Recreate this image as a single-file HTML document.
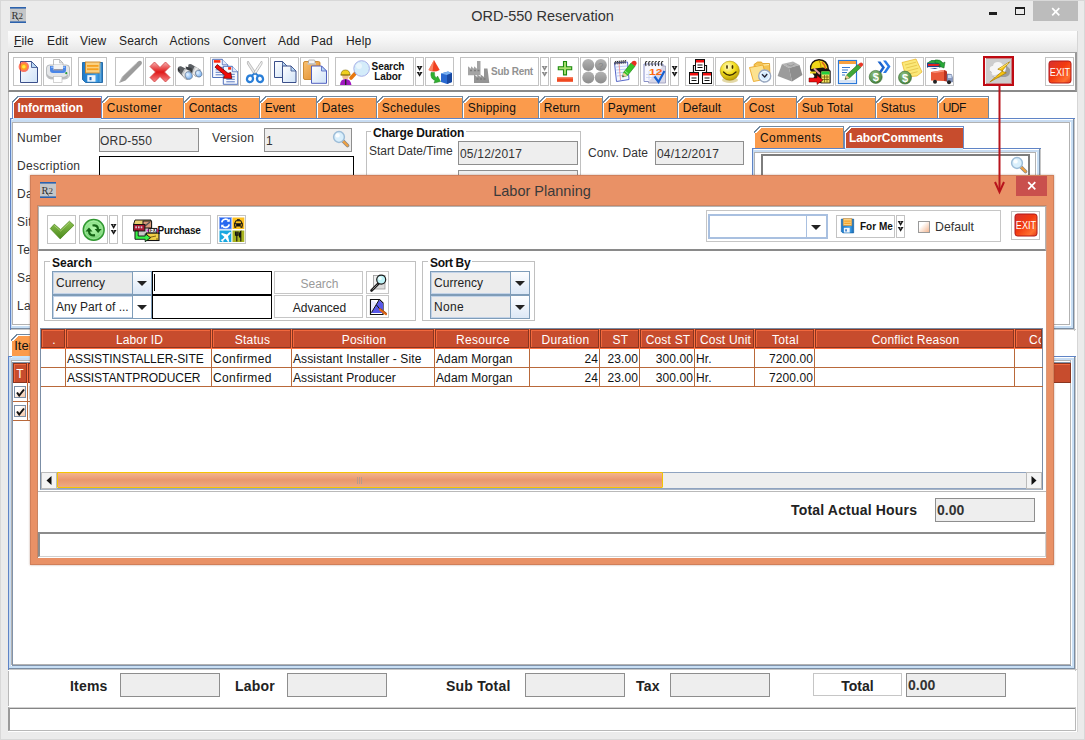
<!DOCTYPE html>
<html><head><meta charset="utf-8"><title>ORD-550 Reservation</title>
<style>
*{box-sizing:border-box;margin:0;padding:0}
html,body{width:1085px;height:740px;overflow:hidden;background:#ebebeb;font-family:"Liberation Sans",sans-serif;font-size:12px;color:#222}
.a,.a2 *{position:absolute}
.a{position:absolute}
#win{position:absolute;left:0;top:0;width:1085px;height:740px;background:#ebebeb;overflow:hidden}
.title{position:absolute;left:0;top:7.600px;width:1085px;text-align:center;font-size:14.5px;color:#333}
.menubar{left:8px;top:31px;width:1069px;height:21px;background:linear-gradient(#fdfdfd,#f6f6f6 40%,#e7e7e7);}
.menubar span{position:absolute;top:3px;font-size:12px;color:#222;letter-spacing:.15px}
.client{left:8px;top:52px;width:1069px;height:680px;background:#fff}
.toolbar{left:8px;top:52px;width:1069px;height:40px;background:#fff;border:1px solid #a5a5a5;border-bottom:2px solid #8a8a8a;border-right:2px solid #999}
.tb{position:absolute;top:57px;width:29px;height:29px;border:1px solid #c3c3c3;background:#fff;overflow:hidden}
.tb svg{position:absolute;left:0;top:0}
svg{display:block}
.dd{position:absolute;top:57px;width:10px;height:29px;border:1px solid #c3c3c3;background:#fff}
.tab{position:absolute;background:#fb9b4c;border-top:1px solid #7088a0;border-right:1px solid #7088a0;box-shadow:inset 1px 1px 0 #fff;font-size:12px;color:#111;padding:4px 0 0 5px;white-space:nowrap}
.tab:before{content:"";position:absolute;left:0;top:-1px;width:7px;height:7px;background:linear-gradient(135deg,#fff 0,#fff 40%,#7088a0 40%,#7088a0 54%,#fff 54%,#fff 66%,rgba(255,255,255,0) 66%)}
.tab.sel{background:#c74c2d;color:#fff;font-weight:bold;border-left:1px solid #6c8cc8;border-top-color:#6c8cc8;border-right-color:#6c8cc8}
.tab.sel:before{left:-1px}
.panel{position:absolute;border:1px solid #7f9fd6;background:#fff}
.panel:before{content:"";position:absolute;left:0;top:0;right:0;bottom:0;border:3px solid #cfe0f6}
.panel:after{content:"";position:absolute;left:3px;top:3px;right:3px;bottom:3px;border:1px solid #a3a3a3}
.lbl{position:absolute;font-size:12px;color:#333;white-space:nowrap;letter-spacing:.3px}
.b{font-weight:bold;letter-spacing:0}
.fld{position:absolute;background:#eeeeee;border:1px solid #8e8e8e;font-size:12px;color:#333;white-space:nowrap;overflow:hidden;letter-spacing:.2px}
.grp{position:absolute;border:1px solid #c0c0c0}
.grp b{position:absolute;top:-8px;left:6px;background:#fff;padding:0 2px;font-size:12px;color:#111;white-space:nowrap}
.th{position:absolute;height:19px;background:#c74c2d;color:#fff;font-size:12px;text-align:center;border:1px solid #8a3520;box-shadow:inset 1px 1px 0 #f2683c;padding:3px 0 0 2px;white-space:nowrap;overflow:hidden;letter-spacing:.3px}
.td{position:absolute;height:19px;font-size:12px;color:#111;white-space:nowrap;overflow:hidden;border-right:1px solid #b9693a;border-bottom:1px solid #b9693a;padding:3px 1px 0 1px;letter-spacing:.1px}
.r{text-align:right;padding-right:1px}
.combo{position:absolute;height:24px;border:1px solid #7f9db9;box-shadow:inset 0 0 0 1px #c3d3e8;background:#ececec;font-size:12px;color:#222;white-space:nowrap}
.combo i{position:absolute;right:0;top:0;bottom:0;width:19px;border-left:1px solid #7f9db9;background:linear-gradient(#fdfeff,#dce8f6)}
.combo i:after{content:"";position:absolute;left:4px;top:9px;border:5px solid transparent;border-top:5px solid #222;border-bottom:none}
.combo span{position:absolute;left:3px;top:4px;letter-spacing:.3px}
.btn{position:absolute;border:1px solid #c6c6c6;background:#fff;font-size:12px;text-align:center;color:#222;letter-spacing:0;padding-left:2px}
</style></head><body>
<div id="win">
<svg width="0" height="0" style="position:absolute"><defs>
<linearGradient id="gdoc" x1="0" y1="0" x2="1" y2="1"><stop offset="0" stop-color="#ffffff"/><stop offset="1" stop-color="#cfe2f7"/></linearGradient>
<linearGradient id="gred" x1="0" y1="0" x2="0" y2="1"><stop offset="0" stop-color="#f7b0b0"/><stop offset=".5" stop-color="#e01818"/><stop offset="1" stop-color="#f58a8a"/></linearGradient>
<linearGradient id="gexit" x1="0" y1="0" x2="1" y2="1"><stop offset="0" stop-color="#d83030"/><stop offset=".45" stop-color="#f23a10"/><stop offset=".8" stop-color="#ff7030"/><stop offset="1" stop-color="#e03818"/></linearGradient>
<radialGradient id="gsmile" cx=".4" cy=".3" r=".8"><stop offset="0" stop-color="#fffbd0"/><stop offset=".45" stop-color="#f5e020"/><stop offset="1" stop-color="#a88a00"/></radialGradient>
<radialGradient id="ggreen" cx=".5" cy=".45" r=".6"><stop offset="0" stop-color="#b4f8ac"/><stop offset=".6" stop-color="#8ce088"/><stop offset="1" stop-color="#48b048"/></radialGradient>
<radialGradient id="gdollar" cx=".4" cy=".3" r=".8"><stop offset="0" stop-color="#8fc080"/><stop offset="1" stop-color="#3e7a36"/></radialGradient>
<linearGradient id="gblue" x1="0" y1="0" x2="1" y2="0"><stop offset="0" stop-color="#1d78c8"/><stop offset=".7" stop-color="#3fa0e8"/><stop offset="1" stop-color="#1668b0"/></linearGradient>
<linearGradient id="gclip" x1="0" y1="0" x2="1" y2="1"><stop offset="0" stop-color="#f8c070"/><stop offset="1" stop-color="#e08a28"/></linearGradient>
<radialGradient id="glens" cx=".4" cy=".35" r=".7"><stop offset="0" stop-color="#e8f4ff"/><stop offset="1" stop-color="#6aa8ee"/></radialGradient>
<linearGradient id="ggray" x1="0" y1="0" x2="0" y2="1"><stop offset="0" stop-color="#b4b4b4"/><stop offset="1" stop-color="#8c8c8c"/></linearGradient>
<linearGradient id="gcheck" x1="0" y1="0" x2="0" y2="1"><stop offset="0" stop-color="#8cc050"/><stop offset="1" stop-color="#4a8a1c"/></linearGradient>
</defs></svg>
<div class="a" style="left:0;top:0;width:1085px;height:740px;border:1px solid #d8d8d8"></div>
<svg class="a" style="left:10px;top:7px" width="16" height="16"><rect width="16" height="16" fill="#c4c6c8"/><rect width="16" height="1.6" fill="#2c62ad"/><rect y="14.4" width="16" height="1.6" fill="#2c62ad"/><text x="1.5" y="11.5" font-family="Liberation Serif,serif" font-size="10.5" fill="#333">R</text><text x="8.5" y="11.5" font-family="Liberation Serif,serif" font-size="9" fill="#333">2</text><path d="M6 11l3 2.5" stroke="#333" stroke-width=".8"/></svg>
<div class="title">ORD-550 Reservation</div>
<div class="a" style="left:989px;top:12px;width:8px;height:3px;background:#1e1e1e"></div>
<div class="a" style="left:1015px;top:7px;width:10px;height:8px;border:1px solid #1e1e1e;border-top:2px solid #1e1e1e"></div>
<div class="a" style="left:1033px;top:1px;width:45px;height:20px;background:#bcbcbc"></div>
<svg class="a" style="left:1051px;top:7px" width="10" height="10"><path d="M1.2 1.2L8.3 8.3M8.3 1.2L1.2 8.3" stroke="#fff" stroke-width="1.7"/></svg>
<div class="a client"></div>
<div class="a" style="left:1077px;top:31px;width:1px;height:701px;background:#d6d6d6"></div><div class="a" style="left:8px;top:92px;width:1px;height:614px;background:#b8b8b8"></div>
<div class="a menubar">
<span style="left:6px"><u>F</u>ile</span>
<span style="left:39px">Edit</span>
<span style="left:72px">View</span>
<span style="left:111px">Search</span>
<span style="left:161.5px">Actions</span>
<span style="left:215px">Convert</span>
<span style="left:270px">Add</span>
<span style="left:303px">Pad</span>
<span style="left:338px">Help</span>
</div>
<div class="a toolbar"></div>
<div class="tb" style="left:13px"><svg width="27" height="27" viewBox="0 0 27 27"><path d="M6.5 3.5h11l6 6v15h-17z" fill="url(#gdoc)" stroke="#3a4f8a" stroke-width="1"/><path d="M17.5 3.5v6h6z" fill="#b8d8f4" stroke="#3a4f8a" stroke-width="0.8"/><circle cx="9.8" cy="8.8" r="5.2" fill="#ff4a2a" opacity=".75"/><circle cx="9.8" cy="8.8" r="3.3" fill="#ffa020"/><circle cx="9.8" cy="8.8" r="1.8" fill="#ffe840"/></svg></div>
<div class="tb" style="left:43px"><svg width="27" height="27" viewBox="0 0 27 27"><path d="M9.5 1.5h6l3.5 3.5v7h-9.5z" fill="#fff" stroke="#b0b0b0" stroke-width=".8"/><path d="M15.5 1.5v3.5h3.5z" fill="#e0e0e0" stroke="#b0b0b0" stroke-width=".6"/><path d="M2.5 10q0-3 3-3h17q3 0 3 3v6q0 5-6 5h-11q-6 0-6-5z" fill="#e4e6e8" stroke="#a8acb0" stroke-width=".8"/><path d="M6 8h16v4q0 3-3 3h-10q-3 0-3-3z" fill="#4a86e8"/><path d="M7 8.5h14v1.5h-14z" fill="#8ab4f4"/><rect x="9.5" y="7" width="9.5" height="5" fill="#f4f4f4"/><rect x="9.5" y="11" width="9.5" height="1.5" fill="#9a9aa8"/><circle cx="22.3" cy="15.2" r="1.1" fill="#2a9a3a"/><path d="M3 16q2 3 6 3h9q4 0 6-3v2q-1 3-6 3h-9q-5 0-6-3z" fill="#b8babc"/><rect x="9.5" y="18.5" width="8.5" height="6" fill="#fff" stroke="#c0c0c0" stroke-width=".7"/></svg></div>
<div class="tb" style="left:78px"><svg width="27" height="27" viewBox="0 0 27 27"><path d="M3.5 4.5h20v20h-17l-3-3z" fill="url(#gblue)" stroke="#0d5aa0" stroke-width=".8"/><rect x="6.5" y="4" width="14.5" height="11" fill="#fbd080" stroke="#c8862a" stroke-width=".9"/><rect x="8" y="7" width="11.5" height="1.8" fill="#f5a020"/><rect x="8" y="10.3" width="11.5" height="1.8" fill="#f5a020"/><rect x="8.3" y="17.2" width="8.2" height="6.5" fill="#f0f6fc"/><rect x="10.5" y="19" width="2" height="3.2" fill="#1d68c0"/><rect x="20.5" y="5" width="2" height="19" fill="#7cc4f4" opacity=".6"/></svg></div>
<div class="tb" style="left:115px"><svg width="27" height="27" viewBox="0 0 27 27"><path d="M3 25L6 19L22 3.5q2-1.5 3.5 0q1.200 1.500-.3 3.200L9.500 22.500z" fill="#9c9c9c"/><path d="M4 24l3-6l14-13" stroke="#c8c8c8" stroke-width="1" fill="none" opacity=".6"/></svg></div>
<div class="tb" style="left:145px"><svg width="27" height="27" viewBox="0 0 27 27"><path d="M4 8.500L8.500 4L14 9.500L19.500 4L24 8.500L18.500 14L24 19.500L19.500 24L14 18.500L8.500 24L4 19.500L9.500 14z" fill="url(#gred)" stroke="#d04040" stroke-width=".8" stroke-linejoin="round"/></svg></div>
<div class="tb" style="left:175px"><svg width="27" height="27" viewBox="0 0 27 27"><path d="M12.300 6.800q1-1.300 3-.6l9.200 5.600l-2.800 7q-1.300.8-2.600-.5l-7-7.500z" fill="#5a5e62"/><path d="M18.500 8.500l6 3.300l-2.800 7q-1.300.8-2.600-.5l-3.300-3.800z" fill="#c8cacc"/><path d="M20 9.300l2.500 1.400l-4.300 6.300l-1.500-1.800z" fill="#f0f0f0" opacity=".8"/><path d="M9.500 8.500l6 1.500l1 4.500l-5 .5z" fill="#3a3e42"/><path d="M1.800 10q.5-2.200 3.200-1.800l9.500 4.800l-3 8.500q-1.500.6-2.700-1L2 13.500q-.6-1.800-.2-3.500z" fill="#5a5e62"/><path d="M8.500 10.800l6 2.200l-3 8.500q-1.500.6-2.700-1l-3.300-4.500z" fill="#c0c2c4"/><path d="M10 11.500l2.500 1l-4.300 6.500l-1.500-2z" fill="#f4f4f4" opacity=".8"/><path d="M2.500 10.500q0 1.500 1 2.500" stroke="#222" stroke-width="1.200" fill="none"/><ellipse cx="12.700" cy="17.500" rx="3.500" ry="3.900" fill="url(#glens)" stroke="#5a6a80" stroke-width=".6" transform="rotate(-20 12.700 17.500)"/><ellipse cx="22.700" cy="15.600" rx="3.100" ry="3.500" fill="url(#glens)" stroke="#5a6a80" stroke-width=".6" transform="rotate(-20 22.700 15.600)"/></svg></div>
<div class="tb" style="left:210px"><svg width="27" height="27" viewBox="0 0 27 27"><path d="M1.6 1.3h9.7l5.5 5.5v12.7h-15.2z" fill="#f6f9ff" stroke="#4062b4" stroke-width=".9"/><path d="M11.3 1.3v5.5h5.5" fill="#dfe8f8" stroke="#4062b4" stroke-width=".7"/><rect x="2.9000000000000004" y="2.1" width="6.5" height="2.600" fill="#ff2a10"/><path d="M4.6 9.3h9.2M4.6 11.8h9.2M4.6 14.3h9.2M4.6 16.8h9.2" stroke="#3458b0" stroke-width=".8"/><path d="M12.3 8.3h9.0l5.5 5.5v12.5h-14.5z" fill="#f6f9ff" stroke="#4062b4" stroke-width=".9"/><path d="M21.3 8.3v5.5h5.5" fill="#dfe8f8" stroke="#4062b4" stroke-width=".7"/><rect x="17.1" y="9.100000000000001" width="3" height="2.600" fill="#ff2a10"/><path d="M15.3 16.3h8.5M15.3 18.8h8.5M15.3 21.3h8.5M15.3 23.8h8.5" stroke="#3458b0" stroke-width=".8"/><path d="M6.300 6.500L4 9.200L13.800 17.200l-1.300 3L20.800 20.500L19.800 14.500l-2.800.8z" fill="#f00808" stroke="#500" stroke-width=".7" stroke-linejoin="round"/></svg></div>
<div class="tb" style="left:240px"><svg width="27" height="27" viewBox="0 0 27 27"><path d="M7 3q-1 1-.5 3L13.500 17l1.500-2z" fill="#e8e8e8" stroke="#a8a8a8" stroke-width=".7"/><path d="M20.500 3q1 1 .5 3L14 17l-1.500-2z" fill="#f4f4f4" stroke="#a8a8a8" stroke-width=".7"/><circle cx="14" cy="15.300" r=".8" fill="#888"/><ellipse cx="9" cy="20.800" rx="3" ry="3.300" fill="none" stroke="#2a7fd8" stroke-width="2.300" transform="rotate(20 9 20.800)"/><ellipse cx="19" cy="20.800" rx="3" ry="3.300" fill="none" stroke="#2a7fd8" stroke-width="2.300" transform="rotate(-20 19 20.800)"/><path d="M11 17.500l2.500-2M17 17.500l-2.500-2" stroke="#2a7fd8" stroke-width="2"/></svg></div>
<div class="tb" style="left:270px"><svg width="27" height="27" viewBox="0 0 27 27"><path d="M3.5 3.5h8l5 5v11h-13z" fill="url(#gdoc)" stroke="#3a4f8a" stroke-width="1"/><path d="M11.5 3.5v5h5z" fill="#b8d8f4" stroke="#3a4f8a" stroke-width="0.8"/><path d="M11.5 8h8.5l5 5v11.5h-13.5z" fill="url(#gdoc)" stroke="#3a4f8a" stroke-width="1"/><path d="M20.0 8v5h5z" fill="#b8d8f4" stroke="#3a4f8a" stroke-width="0.8"/></svg></div>
<div class="tb" style="left:300px"><svg width="27" height="27" viewBox="0 0 27 27"><rect x="2.500" y="3.500" width="16.500" height="18" rx="1.500" fill="url(#gclip)" stroke="#c07818" stroke-width=".8"/><path d="M7.500 6v-3q0-1 1-1h4.500q1 0 1 1v3z" fill="#f4f4f4" stroke="#9a9a9a" stroke-width=".7"/><rect x="6.500" y="5" width="8.500" height="1.600" fill="#c8c8c8"/><path d="M10.5 8h10l5 5v12.3h-15z" fill="url(#gdoc)" stroke="#5060c0" stroke-width="1"/><path d="M20.5 8v5h5z" fill="#b8d8f4" stroke="#5060c0" stroke-width="0.8"/></svg></div>
<div class="tb" style="left:425px"><svg width="27" height="27" viewBox="0 0 27 27"><path d="M8 2L2.500 12q5.500 3 11.200 0z" fill="#f04020"/><path d="M8 2L2.500 12q2 1 4 1.300z" fill="#ffa080" opacity=".7"/><path d="M15 15.500l7-2l4 1.500v9l-5 2l-6-2z" fill="#2868d0"/><path d="M15 15.500l6 1.500l5-2l-4-1.500z" fill="#78b0f0"/><path d="M21 17v9l5-2v-9z" fill="#1848a0"/><path d="M5 14.500q-1 6 4 8l-1 2.500l6.500-1.500l-3-5.500l-1 2q-2.500-1.500-2-5.500z" fill="#30b030" stroke="#208020" stroke-width=".5"/></svg></div>
<div class="tb" style="left:550px"><svg width="27" height="27" viewBox="0 0 27 27"><path d="M12.500 3.500h3v5.200h5.200v3h-5.200v5.200h-3v-5.200h-5.200v-3h5.200z" fill="#a8e070" stroke="#1e8a10" stroke-width="1.100"/><rect x="6" y="19" width="16" height="4.800" fill="#f04820"/><rect x="6" y="19" width="16" height="1.500" fill="#f88060"/></svg></div>
<div class="tb" style="left:580px"><svg width="27" height="27" viewBox="0 0 27 27"><circle cx="7.300" cy="7" r="6" fill="url(#ggray)"/><circle cx="19.800" cy="7" r="6" fill="url(#ggray)"/><circle cx="7.300" cy="19.500" r="6" fill="url(#ggray)"/><circle cx="19.800" cy="19.500" r="6" fill="url(#ggray)"/><text x="17.300" y="10.500" font-family="Liberation Sans,sans-serif" font-size="9" fill="#888">?</text></svg></div>
<div class="tb" style="left:610px"><svg width="27" height="27" viewBox="0 0 27 27"><path d="M3.500 5l13-1l1.500 17.500l-12.500 2z" fill="#f4f8ff" stroke="#5868c8" stroke-width="1"/><path d="M5 9l11-1M5.200 12l11-1M5.500 15l11-1M5.800 18l11-1" stroke="#a8c0f0" stroke-width=".8"/><path d="M8 5l1.500 17" stroke="#f08080" stroke-width=".8"/><path d="M4.200 6.500q-1-3.500 1-3.200M6.200 6.300q-1-3.500 1-3.200M8.200 6.100q-1-3.500 1-3.200M10.200 5.900q-1-3.500 1-3.200M12.200 5.700q-1-3.500 1-3.200M14.200 5.500q-1-3.500 1-3.200" stroke="#222" stroke-width="1" fill="none"/><path d="M11.500 19l1-4.500L20 5l4 3.200L16.500 17.500z" fill="#38c428" stroke="#187810" stroke-width=".6"/><path d="M14 13l3.500 3" stroke="#90e880" stroke-width="1"/><path d="M20 5l1.500-1.700q1.800-1.300 3.600.2q1.300 1.800-.1 3.400L24 8.200z" fill="#e83020"/><path d="M11.500 19l1-4.500l4 3z" fill="#f0d0a0"/><path d="M11.500 19l.4-1.700l1.300 1z" fill="#222"/></svg></div>
<div class="tb" style="left:640px"><svg width="27" height="27" viewBox="0 0 27 27"><path d="M3 6h19v17.500h-19z" fill="#f8f8ff" stroke="#8890c8" stroke-width="1"/><path d="M22 8h2.500v17h-17v-1.500" fill="#d8d8e8" stroke="#9898b8" stroke-width=".8"/><path d="M5 19.500h15M5 16.500h15M8 13v9M12 13v9M16 13v9" stroke="#c8d0f0" stroke-width=".8"/><path d="M5 8q-1.500-5 1.200-4.500M8.200 8q-1.500-5 1.200-4.500M11.400 8q-1.500-5 1.200-4.500M14.600 8q-1.500-5 1.200-4.500M17.800 8q-1.500-5 1.200-4.500M21 8q-1.500-5 1.200-4.500" stroke="#333" stroke-width="1.100" fill="none"/><text x="8" y="16.800" font-family="Liberation Sans,sans-serif" font-weight="bold" font-size="9" fill="#ff6a10" textLength="13.500" lengthAdjust="spacingAndGlyphs">12</text><path d="M13.500 18.500l4 5.500L23.500 13" stroke="#1860d0" stroke-width="2.200" fill="none"/></svg></div>
<div class="tb" style="left:685px"><svg width="27" height="27" viewBox="0 0 27 27"><path d="M7.500 15v-7.500h3M20.500 15v-7.500h-3" stroke="#111" stroke-width="1.200" fill="none"/><rect x="9.5" y="1.5" width="9" height="11" fill="#fff" stroke="#111" stroke-width="1"/><rect x="10.0" y="2.0" width="8" height="2.500" fill="#f01010"/><path d="M11.5 7.0h5M11.5 9.5h5" stroke="#111" stroke-width="1"/><rect x="3.5" y="14.5" width="9" height="11" fill="#fff" stroke="#111" stroke-width="1"/><rect x="4.0" y="15.0" width="8" height="2.500" fill="#f01010"/><path d="M5.5 20.0h5M5.5 22.5h5" stroke="#111" stroke-width="1"/><rect x="16.5" y="14.5" width="9" height="11" fill="#fff" stroke="#111" stroke-width="1"/><rect x="17.0" y="15.0" width="8" height="2.500" fill="#f01010"/><path d="M18.5 20.0h5M18.5 22.5h5" stroke="#111" stroke-width="1"/></svg></div>
<div class="tb" style="left:715px"><svg width="27" height="27" viewBox="0 0 27 27"><ellipse cx="14" cy="22" rx="8" ry="3" fill="#b09000" opacity=".35"/><circle cx="13.800" cy="12.700" r="9.600" fill="url(#gsmile)" stroke="#a08000" stroke-width=".5"/><ellipse cx="11" cy="9" rx=".9" ry="2" fill="#403000"/><ellipse cx="16.500" cy="9" rx=".9" ry="2" fill="#403000"/><path d="M7.500 14q6 6.500 12.500 0" stroke="#403000" stroke-width="1.300" fill="none" stroke-linecap="round"/></svg></div>
<div class="tb" style="left:745px"><svg width="27" height="27" viewBox="0 0 27 27"><path d="M8 6.500l3.500-2.500h4l1 1.500h7l.5 13l-14 3z" fill="#f4c454" stroke="#e09a18" stroke-width=".8"/><path d="M10 8l13-1.500" stroke="#fff0b0" stroke-width="1"/><path d="M3.500 9.500l13.500-2.500l3.500 14l-13 2.500z" fill="#fce290" stroke="#e8a018" stroke-width=".8"/><circle cx="18.700" cy="18" r="6" fill="#d4ecfe" stroke="#9aa8c0" stroke-width="1.400"/><circle cx="18.700" cy="18" r="4.600" fill="none" stroke="#fff" stroke-width=".8"/><path d="M16 16.300l2.700 2.700l2.500-3" stroke="#223" stroke-width="1.300" fill="none"/></svg></div>
<div class="tb" style="left:775px"><svg width="27" height="27" viewBox="0 0 27 27"><path d="M6 6L17 3.500L23.500 7L13 10z" fill="#b4b4b4"/><path d="M6 6L13 10L16 23.500L1.600 18z" fill="#9c9c9c"/><path d="M13 10L23.500 7L26.400 17L16 23.500z" fill="#8e8e8e"/><path d="M11 6.500l4 1.500l3.500-2" stroke="#9a9a9a" stroke-width="1" fill="none"/></svg></div>
<div class="tb" style="left:805px"><svg width="27" height="27" viewBox="0 0 27 27"><path d="M4 12q-1-10 9-11q9 0 10 10l1.500 2v12h-12l-6-3l2-4z" fill="#1a1410"/><path d="M5 11q0-8 8-8.500q7 0 8.500 8l-5-1z" fill="#f0d818"/><path d="M13 2.500q2 3 2 7" stroke="#c09000" stroke-width="1" fill="none"/><path d="M16 4q3 3 3.500 7" stroke="#e06020" stroke-width="1.500" fill="none"/><path d="M8 10.500l6 5.500" stroke="#e8a0a0" stroke-width="1.800"/><path d="M4 13.500h6v2h-6z" fill="#e8d020"/><rect x="15" y="13" width="9" height="12" fill="#f0e060" stroke="#111" stroke-width=".8"/><rect x="15.500" y="13.500" width="8" height="3" fill="#20d040"/><path d="M16 19h7M16 21.500h7M18.500 17v7.500M21 17v7.500" stroke="#605000" stroke-width=".7"/><path d="M3 20h8v-2.500l6 4.500l-6 4.500v-2.500h-8z" fill="#f01010" stroke="#600" stroke-width=".5"/></svg></div>
<div class="tb" style="left:835px"><svg width="27" height="27" viewBox="0 0 27 27"><rect x="2.500" y="2.500" width="18" height="23" fill="#fff" stroke="#2a78d8" stroke-width="1.200"/><rect x="3" y="3" width="17" height="3" fill="#f8a040"/><path d="M6 9.500h8M6 12h6M6 14.500h5M6 17h3" stroke="#3a78d0" stroke-width="1.100"/><rect x="3" y="22" width="17" height="3" fill="#d8e4f4"/><path d="M9 21.500l1.500-4.500L22 6.500l3 2.800L13.500 20z" fill="#40a838" stroke="#206818" stroke-width=".6"/><path d="M22 6.500l1.800-1.600q1.500-1 2.800.3q1 1.400-.2 2.700L25 9.300z" fill="#e83828"/><path d="M9 21.500l1.500-4.500l3 3z" fill="#f0c890"/><path d="M9 21.500l.6-1.800l1.200 1.200z" fill="#222"/></svg></div>
<div class="tb" style="left:865px"><svg width="27" height="27" viewBox="0 0 27 27"><path d="M11.500 3.500h3l4.500 6l-4.500 6.500h-3l4.500-6.500z" fill="#1a62cc"/><path d="M17 2.500h3l4.500 6l-4.500 6.500h-3l4.500-6.500z" fill="#2a7ae6"/><circle cx="9.7" cy="18.9" r="6.5" fill="url(#gdollar)" stroke="#356a30" stroke-width=".6"/><text x="9.7" y="22.9" text-anchor="middle" font-family="Liberation Sans,sans-serif" font-weight="bold" font-size="11" fill="#fff">$</text></svg></div>
<div class="tb" style="left:895px"><svg width="27" height="27" viewBox="0 0 27 27"><path d="M6 4.500l14-3.500l6 13l-5 4l-11 1z" fill="#fbe878" stroke="#e8b020" stroke-width=".7"/><path d="M9 7l11-2.800M10.200 10l11-2.800M11.400 13l11-2.800M12.600 16l9-2.300" stroke="#e8c850" stroke-width="1"/><circle cx="9" cy="19.6" r="6.5" fill="url(#gdollar)" stroke="#356a30" stroke-width=".6"/><text x="9" y="23.6" text-anchor="middle" font-family="Liberation Sans,sans-serif" font-weight="bold" font-size="11" fill="#fff">$</text></svg></div>
<div class="tb" style="left:925px"><svg width="27" height="27" viewBox="0 0 27 27"><path d="M1 5l5-3l9 1v6l-6 2l-8-1.500z" fill="#204090"/><path d="M1 5l5-3l9 1l-5 2.500z" fill="#30a040"/><path d="M2 7h12" stroke="#e02020" stroke-width="2"/><path d="M2 9.500h11" stroke="#f0f0f0" stroke-width="1"/><path d="M9 2q5-1 8 3l2-1l-1 6l-5.500-2l2-1q-2-2.500-5.500-2z" fill="#28a838" stroke="#106018" stroke-width=".5"/><path d="M5 14l13-2v11l-13-.5z" fill="#e85838"/><path d="M5 14l13-2l3 1l-12 2z" fill="#f89078"/><path d="M18 12l3 1.500v10l-3-.5z" fill="#b83020"/><path d="M21 16l4.500.5l1 3v4.500h-5.500z" fill="#8898c0" stroke="#506088" stroke-width=".5"/><rect x="22" y="17" width="3.500" height="3" fill="#c8d8f0"/><circle cx="9" cy="23.800" r="2" fill="#222"/><circle cx="23" cy="24.300" r="2" fill="#222"/></svg></div>
<div class="dd" style="left:415px;top:57px;height:29px;width:9px"><svg class="a" style="left:0;top:0" width="7" height="27"><path d="M.7 8.1h5.800l-2.900 4.800zM.7 13.9h5.800l-2.900 4.800z" fill="#1a1a1a"/><rect x="3.100" y="8.6" width="1" height="1" fill="#fff"/><rect x="3.100" y="14.4" width="1" height="1" fill="#fff"/></svg></div>
<div class="dd" style="left:540px;top:57px;height:29px;width:9px"><svg class="a" style="left:0;top:0" width="7" height="27"><path d="M.7 8.1h5.800l-2.900 4.800zM.7 13.9h5.800l-2.900 4.800z" fill="#8a8a8a"/><rect x="3.100" y="8.6" width="1" height="1" fill="#fff"/><rect x="3.100" y="14.4" width="1" height="1" fill="#fff"/></svg></div>
<div class="dd" style="left:670px;top:57px;height:29px;width:9px"><svg class="a" style="left:0;top:0" width="7" height="27"><path d="M.7 8.1h5.800l-2.900 4.800zM.7 13.9h5.800l-2.900 4.800z" fill="#1a1a1a"/><rect x="3.100" y="8.6" width="1" height="1" fill="#fff"/><rect x="3.100" y="14.4" width="1" height="1" fill="#fff"/></svg></div>
<div class="tb" style="left:335px;width:79px"><svg width="35" height="27" viewBox="0 0 35 27"><path d="M15 20l5.500-6" stroke="#e87810" stroke-width="3.600" stroke-linecap="round"/><path d="M19 15l2.300-2.300" stroke="#555" stroke-width="2"/><circle cx="25.600" cy="10.500" r="7.800" fill="#d4ecfa" stroke="#a8b0e8" stroke-width="1"/><circle cx="23" cy="8" r="3" fill="#fff" opacity=".5"/><circle cx="9.500" cy="18.300" r="3.200" fill="#f0c090"/><path d="M5 17q0-5 4.500-5q4.300 0 4.500 5z" fill="#f0d020" stroke="#806800" stroke-width=".6"/><path d="M4.500 17h10" stroke="#806800" stroke-width=".8"/><path d="M4 27.500q0-6.500 5.500-6.500q5.500 0 6 6.500z" fill="#a018c0"/><path d="M9.700 21.500v6" stroke="#222" stroke-width="1.300"/></svg><span class="a" style="left:32px;top:4px;font-weight:bold;font-size:10px;line-height:9.5px;text-align:center;width:40px;color:#111;letter-spacing:-.1px">Search<br>Labor</span></div>
<div class="tb" style="left:460px;width:79px"><svg width="30" height="27" viewBox="0 0 30 27"><path d="M7 17.300v-9l3 2.500v-2.500l3 2.500v-2.500l3 2.500v-7.800h3.500v14.300z" fill="#a4a4a4"/><path d="M13 25v-8.500l3.300 2.500v-2.500l3.300 2.500v-2.500l3.400 2.500v-8.500h3.500l1.800 14.500z" fill="#949494"/><path d="M9 12.500h2M13 12.500h2M16.500 12.500h2M15.500 21h2M19 21h2M22.500 21h2" stroke="#7c7c7c" stroke-width="1.500"/></svg><span class="a" style="left:30px;top:8px;font-weight:bold;font-size:10px;color:#929292;white-space:nowrap;letter-spacing:-.25px">Sub Rent</span></div>
<div class="a" style="left:983px;top:56px;width:31px;height:30px;border:2px solid #bf0a12;box-shadow:inset 0 0 0 1px rgba(192,10,18,.4);background:#cdcdcd"><svg class="a" style="left:0;top:0" width="27" height="26" viewBox="0 0 27 26"><rect x="0" y="0" width="1" height="26" fill="#f4f4f4"/><path d="M7 15q-2.500-1-1.500-4.500q1-2 3-1.500q.5-4 5-4q3.500 0 4.500 2.500q4-.5 5.500 2q2 1 1.500 4q0 4.500-4.500 5.500h-5q-2 2-5.500 1q-3.500-1-3-5z" fill="#9c9c9c"/><path d="M6.500 14q-2.500-1-1.500-4.500q1-2 3-1.500q.5-4 5-4q3.500 0 4.500 2.500q3 0 3.500 3q0 5.500-5.500 8.500q-2 2-5.500 1q-3.500-1-3.500-5z" fill="#f6f6f6"/><path d="M7 17q3 2 7-1" stroke="#d8d8d8" stroke-width="1.500" fill="none"/><path d="M24.700 3.800L12.800 11.200L17.800 12.800L4.800 24L21.300 14.800L16.800 13.200z" fill="#f8c410" stroke="#a87c00" stroke-width=".7" stroke-linejoin="round"/><path d="M23 5.500L14.500 11" stroke="#ffe880" stroke-width=".9"/></svg></div>
<div class="tb" style="left:1045px;width:29px"><svg width="27" height="27" viewBox="0 0 27 27"><rect x="3" y="3" width="22" height="22" rx="2.500" fill="url(#gexit)" stroke="#b01818" stroke-width="1"/><text x="14" y="17.700" text-anchor="middle" font-family="Liberation Sans,sans-serif" font-size="10" fill="#fff" textLength="20.300" lengthAdjust="spacingAndGlyphs">EXIT</text></svg></div>
<div class="tab sel" style="left:12px;top:96px;width:90px;height:22px;padding-left:4.5px;letter-spacing:-0.05px">Information</div>
<div class="tab" style="left:102px;top:96px;width:82px;height:22px;padding-left:4.7px;letter-spacing:0.42px">Customer</div>
<div class="tab" style="left:184px;top:96px;width:76px;height:22px;padding-left:4.7px;letter-spacing:0.19px">Contacts</div>
<div class="tab" style="left:260px;top:96px;width:57px;height:22px;padding-left:4.7px;letter-spacing:-0.05px">Event</div>
<div class="tab" style="left:317px;top:96px;width:60px;height:22px;padding-left:4.7px;letter-spacing:0.18px">Dates</div>
<div class="tab" style="left:377px;top:96px;width:86px;height:22px;padding-left:4.7px;letter-spacing:0.29px">Schedules</div>
<div class="tab" style="left:463px;top:96px;width:76px;height:22px;padding-left:4.7px;letter-spacing:0.22px">Shipping</div>
<div class="tab" style="left:539px;top:96px;width:64px;height:22px;padding-left:4.7px;letter-spacing:0.05px">Return</div>
<div class="tab" style="left:603px;top:96px;width:75px;height:22px;padding-left:4.7px;letter-spacing:0.05px">Payment</div>
<div class="tab" style="left:678px;top:96px;width:66px;height:22px;padding-left:4.7px;letter-spacing:0.05px">Default</div>
<div class="tab" style="left:744px;top:96px;width:53px;height:22px;padding-left:4.7px;letter-spacing:0.3px">Cost</div>
<div class="tab" style="left:797px;top:96px;width:79px;height:22px;padding-left:4.7px;letter-spacing:0.19px">Sub Total</div>
<div class="tab" style="left:876px;top:96px;width:62px;height:22px;padding-left:4.7px;letter-spacing:0.09px">Status</div>
<div class="tab" style="left:938px;top:96px;width:51px;height:22px;padding-left:4.7px;letter-spacing:-0.5px">UDF</div>
<div class="a" style="left:10px;top:118px;width:1066px;height:213px;background:#fff"></div><div class="a" style="left:10px;top:118px;width:1065px;height:1px;background:#5f84c6"></div><div class="a" style="left:11px;top:119px;width:1063px;height:1px;background:#fff"></div><div class="a" style="left:11px;top:120px;width:1063px;height:2px;background:#c8dcf2"></div><div class="a" style="left:10px;top:118px;width:1px;height:212px;background:#5f84c6"></div><div class="a" style="left:11px;top:119px;width:1px;height:210px;background:#c8dcf2"></div><div class="a" style="left:1073px;top:119px;width:1px;height:210px;background:#7a8da3"></div><div class="a" style="left:1071px;top:120px;width:2px;height:208px;background:#c8dff5"></div><div class="a" style="left:1074px;top:119px;width:1px;height:212px;background:#c6c6c6"></div><div class="a" style="left:11px;top:328px;width:1063px;height:1px;background:#7a8da3"></div><div class="a" style="left:12px;top:326px;width:1060px;height:2px;background:#c8dff5"></div><div class="a" style="left:11px;top:329px;width:1065px;height:1px;background:#c6c6c6"></div><div class="a" style="left:12px;top:122px;width:1058px;height:203px;border:1px solid #b2b2b2"></div><div class="a" style="left:13px;top:118px;width:88px;height:2px;background:#c8e4fb"></div>
<div class="lbl" style="left:17px;top:131px">Number</div>
<div class="lbl" style="left:17px;top:159px">Description</div>
<div class="lbl" style="left:17px;top:187px">Date</div>
<div class="lbl" style="left:17px;top:215px">Site</div>
<div class="lbl" style="left:17px;top:243px">Terms</div>
<div class="lbl" style="left:17px;top:271px">Sales</div>
<div class="lbl" style="left:17px;top:299px">Labor</div>
<div class="fld" style="left:99px;top:128px;width:100px;height:24px;padding:5px 0 0 0">ORD-550</div>
<div class="lbl" style="left:212px;top:131px">Version</div>
<div class="fld" style="left:264px;top:128px;width:88px;height:24px;padding:5px 0 0 1px">1<svg class="a" style="left:67px;top:1px" width="18" height="18" viewBox="0 0 18 18"><path d="M10.5 10.5l5 5" stroke="#8a8a8a" stroke-width="3.6" stroke-linecap="round"/><path d="M10.5 10.5l5 5" stroke="#f0a040" stroke-width="2.2" stroke-linecap="round"/><circle cx="7" cy="7" r="5.4" fill="#d9effc" stroke="#9dbdd8" stroke-width="1.5"/><circle cx="5.6" cy="5.4" r="2.2" fill="#fff" opacity=".85"/></svg></div>
<div class="a" style="left:99px;top:156px;width:255px;height:25px;border:1px solid #000;background:#fff"></div>
<div class="grp" style="left:366px;top:131px;width:215px;height:61px"><b style="top:-6px;left:4px;letter-spacing:-.2px">Charge Duration</b></div>
<div class="lbl" style="left:369px;top:144px;letter-spacing:0">Start Date/Time</div>
<div class="fld" style="left:458px;top:141px;width:120px;height:24px;padding:5px 0 0 1px">05/12/2017</div>
<div class="fld" style="left:458px;top:170px;width:120px;height:23px"></div>
<div class="lbl" style="left:588px;top:146px;letter-spacing:.1px">Conv. Date</div>
<div class="fld" style="left:655px;top:141px;width:89px;height:24px;padding:5px 0 0 1px">04/12/2017</div>
<div class="tab" style="left:754px;top:126px;width:90px;height:22px;padding-left:6px;letter-spacing:0.45px">Comments</div>
<div class="tab sel" style="left:844px;top:126px;width:120px;height:22px;padding-left:4px;letter-spacing:-0.1px">LaborComments</div>
<div class="a" style="left:752px;top:148px;width:290px;height:60px;background:#fff"></div><div class="a" style="left:752px;top:148px;width:289px;height:1px;background:#5f84c6"></div><div class="a" style="left:753px;top:149px;width:287px;height:1px;background:#fff"></div><div class="a" style="left:753px;top:150px;width:287px;height:2px;background:#c8dcf2"></div><div class="a" style="left:752px;top:148px;width:1px;height:59px;background:#5f84c6"></div><div class="a" style="left:753px;top:149px;width:1px;height:57px;background:#c8dcf2"></div><div class="a" style="left:1039px;top:149px;width:1px;height:57px;background:#7a8da3"></div><div class="a" style="left:1037px;top:150px;width:2px;height:55px;background:#c8dff5"></div><div class="a" style="left:1040px;top:149px;width:1px;height:59px;background:#c6c6c6"></div><div class="a" style="left:753px;top:205px;width:287px;height:1px;background:#7a8da3"></div><div class="a" style="left:754px;top:203px;width:284px;height:2px;background:#c8dff5"></div><div class="a" style="left:753px;top:206px;width:289px;height:1px;background:#c6c6c6"></div><div class="a" style="left:754px;top:152px;width:282px;height:50px;border:1px solid #b2b2b2"></div><div class="a" style="left:845px;top:148px;width:118px;height:2px;background:#c8e4fb"></div>
<div class="a" style="left:761px;top:154px;width:269px;height:40px;border:2px solid #7d7d7d;background:#fff"><svg class="a" style="left:247px;top:0px" width="18" height="18" viewBox="0 0 18 18"><path d="M10.5 10.5l5 5" stroke="#8a8a8a" stroke-width="3.6" stroke-linecap="round"/><path d="M10.5 10.5l5 5" stroke="#f0a040" stroke-width="2.2" stroke-linecap="round"/><circle cx="7" cy="7" r="5.4" fill="#d9effc" stroke="#9dbdd8" stroke-width="1.5"/><circle cx="5.6" cy="5.4" r="2.2" fill="#fff" opacity=".85"/></svg></div>
<div class="tab" style="left:11px;top:334px;width:60px;height:23px;padding-left:3.2px;letter-spacing:0px;font-size:13px;padding-top:3px">Items</div>
<div class="a" style="left:8px;top:356px;width:1069px;height:315px;background:#fff"></div><div class="a" style="left:8px;top:356px;width:1068px;height:1px;background:#5f84c6"></div><div class="a" style="left:9px;top:357px;width:1066px;height:1px;background:#fff"></div><div class="a" style="left:9px;top:358px;width:1066px;height:2px;background:#c8dcf2"></div><div class="a" style="left:8px;top:356px;width:1px;height:314px;background:#5f84c6"></div><div class="a" style="left:9px;top:357px;width:2px;height:312px;background:#c8dcf2"></div><div class="a" style="left:1074px;top:357px;width:1px;height:312px;background:#7a8da3"></div><div class="a" style="left:1072px;top:358px;width:2px;height:310px;background:#c8dff5"></div><div class="a" style="left:1075px;top:357px;width:1px;height:314px;background:#c6c6c6"></div><div class="a" style="left:9px;top:668px;width:1066px;height:1px;background:#7a8da3"></div><div class="a" style="left:10px;top:666px;width:1063px;height:2px;background:#c8dff5"></div><div class="a" style="left:9px;top:669px;width:1068px;height:1px;background:#c6c6c6"></div><div class="a" style="left:11px;top:360px;width:1060px;height:305px;border:1px solid #b2b2b2"></div><div class="a" style="left:12px;top:356px;width:58px;height:2px;background:#c8e4fb"></div>
<div class="a" style="left:12px;top:362px;width:1059px;height:304px;border:1px solid #8193aa;border-right:none"></div>
<div class="th" style="left:13px;top:363px;width:14px;height:20px;padding:3px 0 0 0">T</div>
<div class="a" style="left:28px;top:363px;width:1043px;height:20px;background:#c74c2d;border:1px solid #8a3520;box-shadow:inset 1px 1px 0 #f2683c"></div><div class="a" style="left:27px;top:363px;width:1px;height:20px;background:#ff7040"></div>
<div class="a" style="left:13px;top:383px;width:1000px;height:19px;border-bottom:1px solid #b9693a"></div>
<div class="a" style="left:13px;top:383px;width:15px;height:19px;border-right:1px solid #b9693a"></div><div class="a" style="left:29px;top:386px;width:2px;height:13px;background:#d8d8d8"></div>
<div class="a" style="left:14px;top:386px;width:12px;height:12px;border:1px solid #7c8fa6;background:linear-gradient(135deg,#fff 30%,#f5c3a0)"><svg class="a" style="left:0;top:0" width="10" height="10"><path d="M2 5.500l2.200 3L9 2.500" stroke="#111" stroke-width="2" fill="none"/></svg></div>
<div class="a" style="left:13px;top:402px;width:1000px;height:19px;border-bottom:1px solid #b9693a"></div>
<div class="a" style="left:13px;top:402px;width:15px;height:19px;border-right:1px solid #b9693a"></div><div class="a" style="left:29px;top:405px;width:2px;height:13px;background:#d8d8d8"></div>
<div class="a" style="left:14px;top:405px;width:12px;height:12px;border:1px solid #7c8fa6;background:linear-gradient(135deg,#fff 30%,#f5c3a0)"><svg class="a" style="left:0;top:0" width="10" height="10"><path d="M2 5.500l2.200 3L9 2.500" stroke="#111" stroke-width="2" fill="none"/></svg></div>
<div class="lbl b" style="left:70px;top:678px;font-size:14px;color:#222;letter-spacing:.2px">Items</div>
<div class="fld" style="left:120px;top:673px;width:100px;height:24px;font-weight:bold;font-size:14px;padding:3px 0 0 1px;letter-spacing:0"></div>
<div class="lbl b" style="left:235px;top:678px;font-size:14px;color:#222;letter-spacing:.2px">Labor</div>
<div class="fld" style="left:287px;top:673px;width:100px;height:24px;font-weight:bold;font-size:14px;padding:3px 0 0 1px;letter-spacing:0"></div>
<div class="lbl b" style="left:446px;top:678px;font-size:14px;color:#222;letter-spacing:.2px">Sub Total</div>
<div class="fld" style="left:525px;top:673px;width:100px;height:24px;font-weight:bold;font-size:14px;padding:3px 0 0 1px;letter-spacing:0"></div>
<div class="lbl b" style="left:636px;top:678px;font-size:14px;color:#222;letter-spacing:.2px">Tax</div>
<div class="fld" style="left:670px;top:673px;width:100px;height:24px;font-weight:bold;font-size:14px;padding:3px 0 0 1px;letter-spacing:0"></div>
<div class="a" style="left:813px;top:673px;width:89px;height:23px;border:1px solid #c6c6c6;background:#fff;text-align:center;font-weight:bold;font-size:14px;padding-top:4px;color:#222">Total</div>
<div class="fld" style="left:906px;top:673px;width:100px;height:24px;font-weight:bold;font-size:14px;padding:3px 0 0 1px;letter-spacing:0">0.00</div>

<div class="a" style="left:8px;top:707px;width:1068px;height:24px;border:1px solid #858585;border-left:2px solid #9a9a9a;border-right:1px solid #b8b8b8;border-bottom:1px solid #b8b8b8;border-top:1px solid #d2d2d2;box-shadow:inset 0 1px 0 #858585;background:#fff"></div>
<div class="a" style="left:30px;top:175px;width:1024px;height:390px;background:#e99166;border:1px solid #d07f5a;box-shadow:0 0 2px rgba(120,60,30,.45)"></div>
<svg class="a" style="left:40px;top:182px" width="16" height="16"><rect width="16" height="16" fill="#c4c6c8"/><rect width="16" height="1.6" fill="#2c62ad"/><rect y="14.4" width="16" height="1.6" fill="#2c62ad"/><text x="1.5" y="11.5" font-family="Liberation Serif,serif" font-size="10.5" fill="#333">R</text><text x="8.5" y="11.5" font-family="Liberation Serif,serif" font-size="9" fill="#333">2</text><path d="M6 11l3 2.5" stroke="#333" stroke-width=".8"/></svg>
<div class="a" style="left:30px;top:183px;width:1024px;text-align:center;font-size:14.5px;color:#3a3a3a">Labor Planning</div>
<div class="a" style="left:1016px;top:176px;width:31px;height:20px;background:#c9504d"></div>
<svg class="a" style="left:1027px;top:181px" width="10" height="10"><path d="M1.2 1.2L8.3 8.3M8.3 1.2L1.2 8.3" stroke="#fff" stroke-width="1.7"/></svg>
<div class="a" style="left:37px;top:205px;width:1010px;height:353px;background:#fff;border:1px solid #c98462;border-right-color:#d99a7a;border-bottom:none"></div>
<div class="a" style="left:38px;top:206px;width:1008px;height:45px;border:1px solid #b4b4b4;border-bottom:2px solid #8a8a8a"></div>
<div class="tb" style="left:47px;top:215px"><svg width="27" height="27" viewBox="0 0 27 27"><path d="M2.300 12.600L6.300 8.200L12.600 13.700L21.400 5.200L25.900 9.300L12.200 22.900z" fill="url(#gcheck)" stroke="#4f8a1e" stroke-width=".8" stroke-linejoin="round"/><path d="M6.300 9.500L12.600 15L21.400 6.500" stroke="#b8dc80" stroke-width="1" fill="none" opacity=".7"/></svg></div>
<div class="tb" style="left:79px;top:215px"><svg width="27" height="27" viewBox="0 0 27 27"><circle cx="13.700" cy="13.900" r="10.500" fill="url(#ggreen)" stroke="#2f962f" stroke-width="1.300"/><circle cx="13.700" cy="13.900" r="8.800" fill="none" stroke="#c8ffc0" stroke-width=".8" opacity=".6"/><path d="M12.500 9.500q5.500-1 5.500 4" stroke="#146414" stroke-width="2.200" fill="none"/><path d="M14.600 13h7l-3.500 4z" fill="#146414"/><path d="M15 19.200q-6 1-6-4.200" stroke="#146414" stroke-width="2.200" fill="none"/><path d="M5.500 15.500h7l-3.500-4z" fill="#146414"/></svg></div>
<div class="dd" style="left:109px;top:215px;height:29px;width:9px"><svg class="a" style="left:0;top:0" width="7" height="27"><path d="M.7 8.1h5.800l-2.900 4.800zM.7 13.9h5.800l-2.900 4.800z" fill="#1a1a1a"/><rect x="3.100" y="8.6" width="1" height="1" fill="#fff"/><rect x="3.100" y="14.4" width="1" height="1" fill="#fff"/></svg></div>
<div class="tb" style="left:122px;top:215px;width:89px"><svg width="40" height="27" viewBox="0 0 40 27"><rect x="11.500" y="5.500" width="18" height="17" fill="#222" opacity=".25"/><path d="M10.500 8.500l1.500-4.500h16l-1.500 4.500z" fill="#e8d070" stroke="#111" stroke-width=".9"/><rect x="20" y="5" width="8.500" height="7" fill="#d89878" stroke="#111" stroke-width=".9"/><path d="M22 10l5-4" stroke="#555" stroke-width="1.500"/><rect x="10.600" y="8.500" width="11.300" height="6.500" fill="#a81830" stroke="#111" stroke-width=".9"/><rect x="12.300" y="10.300" width="1.600" height="2" fill="#d8c8d8"/><rect x="15" y="10.300" width="1.600" height="2" fill="#d8c8d8"/><rect x="17.700" y="10.300" width="1.600" height="2" fill="#d8c8d8"/><rect x="23.600" y="17" width="12.400" height="7.500" fill="#f0d048" stroke="#111" stroke-width="1.100"/><path d="M26 21.500l7-1.500M33 23h2" stroke="#806010" stroke-width="1"/><path d="M12 15h3.200v5h7v-2.300l5.300 4l-5.300 4v-2.400h-10.200z" fill="#38f048" stroke="#111" stroke-width=".9" stroke-linejoin="round"/><path d="M23.500 14.600l3-2.500v5zM36.500 14.600l-3-2.500v5z" fill="#f020e0"/><rect x="25.800" y="12.400" width="8" height="4.400" fill="#fff" stroke="#111" stroke-width=".9"/><text x="27" y="16.200" font-family="Liberation Sans,sans-serif" font-weight="bold" font-size="4.500" fill="#111">FX</text></svg><span class="a" style="left:34.500px;top:9px;font-weight:bold;font-size:10px;letter-spacing:-.25px;color:#111">Purchase</span></div>
<div class="tb" style="left:217px;top:215px"><svg width="27" height="27" viewBox="0 0 27 27"><rect x="1.500" y="1.500" width="11.800" height="11.500" fill="#2868f0" stroke="#90b0f8" stroke-width=".8"/><path d="M3.800 6.300a3.800 3.800 0 0 1 7-1.300M11.200 8.300a3.800 3.800 0 0 1-7 1.300" stroke="#fff" stroke-width="1.700" fill="none"/><path d="M11.800 2.800v3h-3zM3.200 11.800v-3h3z" fill="#fff"/><rect x="14.500" y="1.500" width="11.800" height="11.500" fill="#fcc020"/><path d="M16 10.500v-3l1.800-3.300h5.200l1.800 3.300v3z" fill="#111"/><path d="M18.300 5.200h4.200l.9 2h-6z" fill="#fcc020"/><rect x="19" y="3.200" width="2.800" height="1.200" fill="#111"/><rect x="16.300" y="10.500" width="2" height="1.300" fill="#111"/><rect x="22.500" y="10.500" width="2" height="1.300" fill="#111"/><circle cx="17.500" cy="9" r=".8" fill="#fcc020"/><circle cx="23.300" cy="9" r=".8" fill="#fcc020"/><rect x="1.500" y="14.500" width="11.800" height="11.500" fill="#18a8e0"/><path d="M2.500 24l2.200-1l1.800-2l-3.500-3l1-1l5 1.500l2-2q1.500-1 1.800-.3q.3.800-.8 2l-2 2l1.200 5l-1 1l-2.700-3.700l-2 1.800l-.3 2z" fill="#fff"/><rect x="14.500" y="14.500" width="11.800" height="11.500" fill="#a8b420"/><path d="M18.800 15.500v10M17.500 15.500v3.800h2.600v-3.800" stroke="#111" stroke-width="1.100" fill="none"/><path d="M22.800 15.500q-1.800 1.500-1.300 5.500h1.300zM22.800 15.500v10" stroke="#111" stroke-width="1.100" fill="#111"/></svg></div>
<div class="a" style="left:706px;top:210px;width:295px;height:32px;border:1px solid #c6c6c6"></div>
<div class="combo" style="left:708px;top:214px;width:120px;height:25px;box-shadow:none;background:#fff;border:2px solid #a9c0e0"><i style="background:#fff;border-left:1px solid #a9c0e0;width:20px"></i></div>
<div class="tb" style="left:836px;top:215px;width:59px;height:23px"><svg class="a" style="left:3px;top:2px" width="15" height="16" viewBox="0 0 20 22"><path d="M1.500 1.500h17v19h-15l-2-2z" fill="url(#gblue)" stroke="#0d5aa0" stroke-width=".8"/><rect x="4" y="1" width="12" height="9.500" fill="#fbd080" stroke="#c8862a" stroke-width=".8"/><rect x="5.500" y="3.500" width="9" height="1.600" fill="#f5a020"/><rect x="5.500" y="6.500" width="9" height="1.600" fill="#f5a020"/><rect x="5" y="13.500" width="8" height="6.500" fill="#f0f6fc"/><rect x="7" y="15.500" width="2" height="3" fill="#1d68c0"/></svg><span class="a" style="left:23px;top:5px;font-weight:bold;font-size:10px;color:#111;white-space:nowrap">For Me</span></div>
<div class="dd" style="left:896px;top:215px;height:23px;width:9px"><svg class="a" style="left:0;top:0" width="7" height="21"><path d="M.7 5.1h5.800l-2.900 4.800zM.7 10.9h5.800l-2.900 4.800z" fill="#1a1a1a"/><rect x="3.100" y="5.6" width="1" height="1" fill="#fff"/><rect x="3.100" y="11.4" width="1" height="1" fill="#fff"/></svg></div>
<div class="a" style="left:918px;top:221px;width:12px;height:12px;border:1px solid #9a9a9a;background:linear-gradient(135deg,#fff 30%,#f3b792)"></div>
<div class="lbl" style="left:935px;top:220px;font-size:12.300px;letter-spacing:0">Default</div>
<div class="tb" style="left:1011px;top:211px;width:29px;height:29px"><svg width="27" height="27" viewBox="0 0 27 27"><rect x="3" y="2" width="22" height="22" rx="2.500" fill="url(#gexit)" stroke="#b01818" stroke-width="1"/><text x="14" y="16.700" text-anchor="middle" font-family="Liberation Sans,sans-serif" font-size="10" fill="#fff" textLength="20.300" lengthAdjust="spacingAndGlyphs">EXIT</text></svg></div>
<div class="grp" style="left:44px;top:261px;width:372px;height:60px"><b style="top:-6px;left:5px">Search</b></div>
<div class="combo" style="left:52px;top:271px;width:100px;border-color:#7f9db9;background:#eaeaea"><span style="letter-spacing:.05px">Currency</span><i></i></div>
<div class="combo" style="left:52px;top:295px;width:100px;background:#fff"><span style="letter-spacing:0">Any Part of ...</span><i style="background:#fff"></i></div>
<div class="a" style="left:152px;top:271px;width:120px;height:24px;border:1px solid #000;background:#fff"><div class="a" style="left:1px;top:2px;width:1px;height:17px;background:#000"></div></div>
<div class="a" style="left:152px;top:295px;width:120px;height:24px;border:1px solid #000;background:#fff"></div>
<div class="btn" style="left:274px;top:271px;width:89px;height:23px;color:#9a9a9a;padding-top:5px">Search</div>
<div class="btn" style="left:274px;top:295px;width:89px;height:23px;padding-top:5px">Advanced</div>
<div class="btn" style="left:366px;top:271px;width:23px;height:23px;padding:0"><div class="a" style="left:0;top:0;width:21px;height:21px"><svg width="21" height="21" viewBox="0 0 21 21"><rect x="6.500" y="3.500" width="11.500" height="13.500" fill="#dcdcdc" stroke="#9a9a9a" stroke-width=".8"/><path d="M7 4h4v9h-4z" fill="#f0f0f0"/><path d="M11.500 11.500L4.500 18.500" stroke="#1a1a1a" stroke-width="2.600" stroke-linecap="round"/><path d="M10.500 12.500l-5 5" stroke="#a0a0a0" stroke-width=".8"/><circle cx="14.200" cy="7.600" r="4.500" fill="#c0f4f8" stroke="#1a1a1a" stroke-width="1.200"/><circle cx="13" cy="6.500" r="1.800" fill="#f0ffff"/></svg></div></div>
<div class="btn" style="left:366px;top:295px;width:23px;height:23px;padding:0"><div class="a" style="left:0;top:0;width:21px;height:21px"><svg width="21" height="21" viewBox="0 0 21 21"><path d="M3.500 3.500h9l3.500 3.500v11.500h-12.500z" fill="#fff" stroke="#111" stroke-width="1.200"/><path d="M12 4l-8 13h12v-9.500z" fill="#5858e8"/><path d="M4 5q4 0 6 2l-6 9z" fill="#e8e8ff"/><path d="M12 4l-7.500 12.500" stroke="#111" stroke-width="1"/><path d="M9.500 9l4 5" stroke="#111" stroke-width="1"/><path d="M13 13.500l6 4.500" stroke="#e06818" stroke-width="2.200" stroke-linecap="round"/><path d="M13 13.500l6 4.500" stroke="#803000" stroke-width=".6" transform="translate(.6,-.8)"/></svg></div></div>
<div class="grp" style="left:422px;top:261px;width:113px;height:60px"><b style="top:-6px;left:5px;letter-spacing:-.35px">Sort By</b></div>
<div class="combo" style="left:430px;top:271px;width:100px"><span style="letter-spacing:.05px">Currency</span><i></i></div>
<div class="combo" style="left:430px;top:295px;width:100px"><span>None</span><i></i></div>
<div class="a" style="left:40px;top:328px;width:1003px;height:162px;border:1px solid #7b8ea6;border-bottom-color:#a8b4c4;background:#fff"></div>
<div class="a" style="left:41px;top:329px;width:1001px;height:20px;background:#ff7040"></div>
<div class="th" style="left:41px;top:329px;width:24px;letter-spacing:0px">.</div>
<div class="th" style="left:66px;top:329px;width:145px;letter-spacing:0.15px">Labor ID</div>
<div class="th" style="left:212px;top:329px;width:79px;letter-spacing:0.25px">Status</div>
<div class="th" style="left:292px;top:329px;width:142px;letter-spacing:0.25px">Position</div>
<div class="th" style="left:435px;top:329px;width:94px;letter-spacing:0.3px">Resource</div>
<div class="th" style="left:530px;top:329px;width:69px;letter-spacing:0.3px">Duration</div>
<div class="th" style="left:600px;top:329px;width:39px;letter-spacing:0.3px">ST</div>
<div class="th" style="left:640px;top:329px;width:54px;letter-spacing:0.2px">Cost ST</div>
<div class="th" style="left:695px;top:329px;width:59px;letter-spacing:0.2px">Cost Unit</div>
<div class="th" style="left:755px;top:329px;width:59px;letter-spacing:0.3px">Total</div>
<div class="th" style="left:815px;top:329px;width:199px;letter-spacing:0.2px">Conflict Reason</div>
<div class="th" style="left:1015px;top:329px;width:27px;letter-spacing:0.3px;text-align:left;padding-left:13px">Co</div>
<div class="td" style="left:41px;top:349px;width:25px;letter-spacing:0px"></div>
<div class="td" style="left:66px;top:349px;width:146px;letter-spacing:-0.06px">ASSISTINSTALLER-SITE</div>
<div class="td" style="left:212px;top:349px;width:80px;letter-spacing:0.38px">Confirmed</div>
<div class="td" style="left:292px;top:349px;width:143px;letter-spacing:0.12px">Assistant Installer - Site</div>
<div class="td" style="left:435px;top:349px;width:95px;letter-spacing:0.1px">Adam Morgan</div>
<div class="td r" style="left:530px;top:349px;width:70px;letter-spacing:0.1px">24</div>
<div class="td r" style="left:600px;top:349px;width:40px;letter-spacing:0.1px">23.00</div>
<div class="td r" style="left:640px;top:349px;width:55px;letter-spacing:0.1px">300.00</div>
<div class="td" style="left:695px;top:349px;width:60px;letter-spacing:0.1px">Hr.</div>
<div class="td r" style="left:755px;top:349px;width:60px;letter-spacing:0.1px">7200.00</div>
<div class="td" style="left:815px;top:349px;width:200px;letter-spacing:0px"></div>
<div class="td" style="left:1015px;top:349px;width:28px;letter-spacing:0px;border-right:none"></div>
<div class="td" style="left:41px;top:368px;width:25px;letter-spacing:0px"></div>
<div class="td" style="left:66px;top:368px;width:146px;letter-spacing:-0.06px">ASSISTANTPRODUCER</div>
<div class="td" style="left:212px;top:368px;width:80px;letter-spacing:0.38px">Confirmed</div>
<div class="td" style="left:292px;top:368px;width:143px;letter-spacing:0.12px">Assistant Producer</div>
<div class="td" style="left:435px;top:368px;width:95px;letter-spacing:0.1px">Adam Morgan</div>
<div class="td r" style="left:530px;top:368px;width:70px;letter-spacing:0.1px">24</div>
<div class="td r" style="left:600px;top:368px;width:40px;letter-spacing:0.1px">23.00</div>
<div class="td r" style="left:640px;top:368px;width:55px;letter-spacing:0.1px">300.00</div>
<div class="td" style="left:695px;top:368px;width:60px;letter-spacing:0.1px">Hr.</div>
<div class="td r" style="left:755px;top:368px;width:60px;letter-spacing:0.1px">7200.00</div>
<div class="td" style="left:815px;top:368px;width:200px;letter-spacing:0px"></div>
<div class="td" style="left:1015px;top:368px;width:28px;letter-spacing:0px;border-right:none"></div>
<div class="a" style="left:41px;top:472px;width:1001px;height:17px;background:#eeeeee;border-top:1px solid #8fa3c0;border-bottom:1px solid #8fa3c0"></div>
<div class="a" style="left:41px;top:472px;width:16px;height:17px;background:#f4f4f4;border:1px solid #bbb"><svg class="a" style="left:4px;top:3px" width="6" height="9"><path d="M5.5 0v9L0.5 4.5z" fill="#111"/></svg></div>
<div class="a" style="left:1026px;top:472px;width:16px;height:17px;background:#f4f4f4;border:1px solid #bbb"><svg class="a" style="left:4px;top:3px" width="6" height="9"><path d="M.5 0v9L5.5 4.5z" fill="#111"/></svg></div>
<div class="a" style="left:57px;top:472px;width:606px;height:16px;background:linear-gradient(#f3b48e,#e9976c 50%,#eeaa84);border:1px solid #f5c400;border-radius:1px"><div class="a" style="left:299px;top:4px;width:5px;height:7px;border-left:1px solid #b98;border-right:1px solid #b98"><div class="a" style="left:1px;top:0;width:1px;height:7px;background:#b98"></div></div></div>
<div class="lbl b" style="left:791px;top:502px;font-size:14px;color:#222;letter-spacing:.18px">Total Actual Hours</div><div class="a" style="left:38px;top:491px;width:1008px;height:1px;background:#b9b9b9"></div>
<div class="fld" style="left:935px;top:498px;width:100px;height:24px;font-weight:bold;font-size:14px;padding:3px 0 0 1px;letter-spacing:0">0.00</div>
<div class="a" style="left:38px;top:532px;width:1008px;height:25px;border:2px solid #8c8c8c;border-right:1px solid #d0d0d0;border-bottom:1px solid #d0d0d0;background:#fff"></div>
<svg class="a" style="left:990px;top:86px" width="20" height="110"><path d="M9.5 0V104" stroke="#b8141c" stroke-width="2"/><path d="M5 96L9.5 106L14 96" stroke="#b8141c" stroke-width="2" fill="none"/></svg>
</div>
</body></html>
